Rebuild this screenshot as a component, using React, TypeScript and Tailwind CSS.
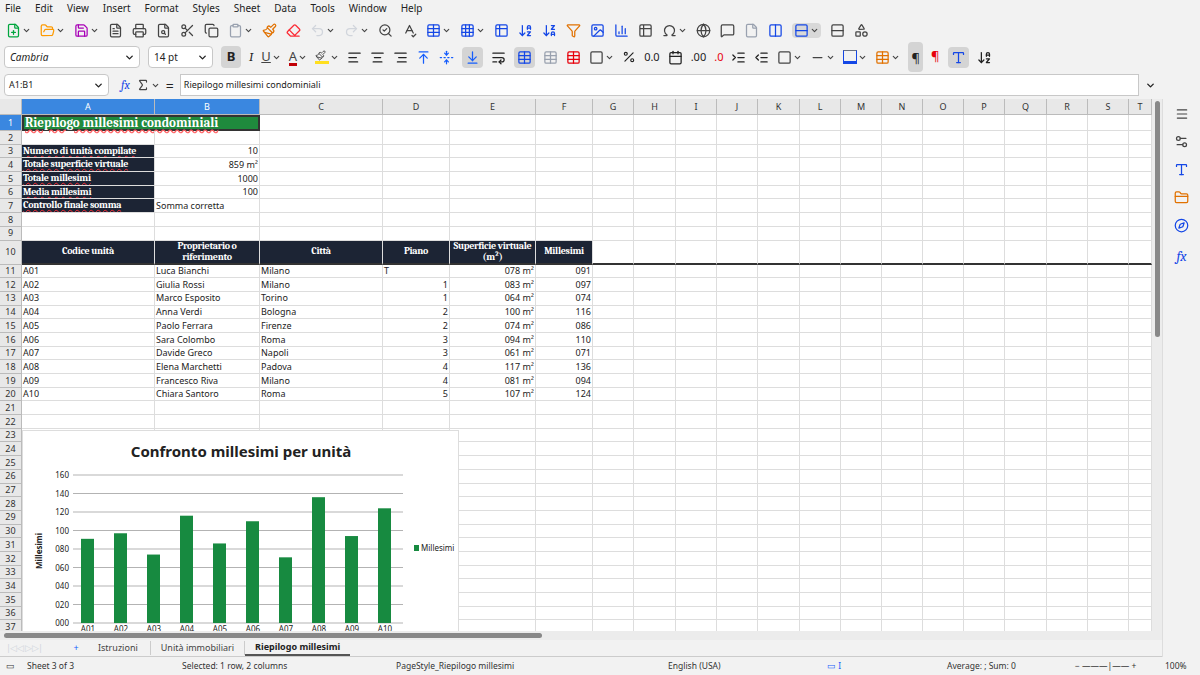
import React from "react";
import {
  FilePlus, FolderOpen, Save, FileText, Printer, FileSearch, Scissors, Copy, Clipboard, Paintbrush, Eraser,
  Undo2, Redo2, SearchCheck, SpellCheck, Table, Grid3x3, ArrowDownAZ, ArrowDownZA, Filter, Image, BarChart3,
  Table2, Omega, Globe, MessageSquare, File, Columns2, Rows2, Shapes, ChevronDown, AlignLeft, AlignCenter,
  AlignRight, ArrowUpToLine, FoldVertical, ArrowDownToLine, WrapText, Percent, Calendar, IndentIncrease,
  IndentDecrease, Square, Minus, Menu, Settings2, Type, FolderClosed, Compass, Sigma,
} from "lucide-react";

const cols: [string, number][] = [
  ["A", 133], ["B", 105], ["C", 123], ["D", 67], ["E", 86], ["F", 57], ["G", 41], ["H", 42], ["I", 41], ["J", 41],
  ["K", 42], ["L", 41], ["M", 41], ["N", 41], ["O", 41], ["P", 41], ["Q", 42], ["R", 41], ["S", 41], ["T", 23],
];
const gridCols = "22px " + cols.map((c) => c[1] + "px").join(" ");

const units = [
  ["A01", "Luca Bianchi", "Milano", "T", "078", "091"],
  ["A02", "Giulia Rossi", "Milano", "1", "083", "097"],
  ["A03", "Marco Esposito", "Torino", "1", "064", "074"],
  ["A04", "Anna Verdi", "Bologna", "2", "100", "116"],
  ["A05", "Paolo Ferrara", "Firenze", "2", "074", "086"],
  ["A06", "Sara Colombo", "Roma", "3", "094", "110"],
  ["A07", "Davide Greco", "Napoli", "3", "061", "071"],
  ["A08", "Elena Marchetti", "Padova", "4", "117", "136"],
  ["A09", "Francesco Riva", "Milano", "4", "081", "094"],
  ["A10", "Chiara Santoro", "Roma", "5", "107", "124"],
];

const dark = "bg-[#1c2434] text-white font-bold font-serif tracking-[-0.3px]";

function rowHeight(r: number) {
  if (r === 1) return 16;
  if (r === 10) return 24;
  return 13.7;
}

function cellContent(r: number, c: number): { text?: React.ReactNode; cls?: string } {
  const info: Record<number, [string, string]> = {
    3: ["Numero di unità compilate", "10"],
    4: ["Totale superficie virtuale", "859 m²"],
    5: ["Totale millesimi", "1000"],
    6: ["Media millesimi", "100"],
    7: ["Controllo finale somma", ""],
  };
  if (r >= 3 && r <= 7) {
    if (c === 0) return { text: info[r][0], cls: dark + " text-[10px] underline decoration-wavy decoration-red-500" };
    if (c === 1) return r === 7 ? { text: "Somma corretta" } : { text: info[r][1], cls: "justify-end" };
  }
  if (r === 10 && c <= 5) {
    const h = ["Codice unità", "Proprietario o riferimento", "Città", "Piano", "Superficie virtuale (m²)", "Millesimi"];
    return { text: h[c], cls: dark + " text-[10px] justify-center text-center leading-[11px] border-b-2 border-b-[#333]" };
  }
  if (r === 10) return { cls: "border-b-2 border-b-[#333]" };
  if (r >= 11 && r <= 20 && c <= 5) {
    const u = units[r - 11];
    if (c === 3) return { text: u[3], cls: u[3] === "T" ? "" : "justify-end" };
    if (c === 4) return { text: u[4] + " m²", cls: "justify-end" };
    if (c === 5) return { text: u[5], cls: "justify-end" };
    return { text: u[c] };
  }
  return {};
}

function Chart() {
  const vals = [91, 97, 74, 116, 86, 110, 71, 136, 94, 124];
  const y = (v: number) => 474 - 430 + (160 - v) * (148 / 160);
  return (
    <div className="absolute left-[22px] top-[331px] w-[437px] h-[202px] bg-white border border-[#ddd]">
      <svg width="437" height="202" className="font-['Lato',sans-serif]">
        <text x="218" y="26" textAnchor="middle" fontSize="15" fontWeight="bold" fill="#222">Confronto millesimi per unità</text>
        {[0, 20, 40, 60, 80, 100, 120, 140, 160].map((v) => (
          <g key={v}>
            <line x1="50" x2="380" y1={y(v)} y2={y(v)} stroke="#b3b3b3" strokeWidth="1" />
            <text x="46" y={y(v) + 3} textAnchor="end" fontSize="8" fill="#222">{String(v).padStart(3, "0")}</text>
          </g>
        ))}
        {vals.map((v, i) => (
          <g key={i}>
            <rect x={58 + i * 33} y={y(v)} width="13" height={y(0) - y(v)} fill="#178a40" />
            <text x={65 + i * 33} y="201" textAnchor="middle" fontSize="8" fill="#222">{"A" + String(i + 1).padStart(2, "0")}</text>
          </g>
        ))}
        <text x="19" y="120" transform="rotate(-90 19 120)" fontSize="8" fontWeight="bold" fill="#222" textAnchor="middle">Millesimi</text>
        <rect x="391" y="114" width="5" height="6" fill="#178a40" />
        <text x="398" y="120" fontSize="8" fill="#222">Millesimi</text>
      </svg>
    </div>
  );
}

function Tb({ children, dd }: { children: React.ReactNode; dd?: boolean }) {
  return (
    <div className="flex items-center gap-[1px] text-[#444]">
      {children}
      {dd && <ChevronDown size={9} strokeWidth={3} />}
    </div>
  );
}

const S = 15;

export default function App() {
  const rows = Array.from({ length: 37 }, (_, i) => i + 1);
  return (
    <div className="w-[1200px] h-[675px] overflow-hidden bg-[#f2f2f2] font-['Open_Sans',sans-serif] text-[#222] flex flex-col">
      <div className="h-[17px] flex items-center gap-[14px] px-[5px] text-[10px]">
        {["File", "Edit", "View", "Insert", "Format", "Styles", "Sheet", "Data", "Tools", "Window", "Help"].map((m) => (
          <span key={m}>{m}</span>
        ))}
      </div>
      <div className="h-[26px] flex items-center gap-[9px] px-[6px]">
        <Tb dd><FilePlus size={S} className="text-green-600" /></Tb>
        <Tb dd><FolderOpen size={S} className="text-amber-500" /></Tb>
        <Tb dd><Save size={S} className="text-fuchsia-700" /></Tb>
        <Tb><FileText size={S} /></Tb><Tb><Printer size={S} /></Tb><Tb><FileSearch size={S} /></Tb>
        <Tb><Scissors size={S} /></Tb><Tb><Copy size={S} /></Tb><Tb dd><Clipboard size={S} className="text-gray-400" /></Tb>
        <Tb><Paintbrush size={S} className="text-amber-600" /></Tb><Tb><Eraser size={S} className="text-red-500" /></Tb>
        <Tb dd><Undo2 size={S} className="text-gray-300" /></Tb><Tb dd><Redo2 size={S} className="text-gray-300" /></Tb>
        <Tb><SearchCheck size={S} /></Tb><Tb><SpellCheck size={S} /></Tb>
        <Tb dd><Table size={S} className="text-blue-700" /></Tb><Tb dd><Grid3x3 size={S} className="text-blue-700" /></Tb>
        <Tb><Table2 size={S} className="text-blue-700" /></Tb><Tb><ArrowDownAZ size={S} className="text-blue-700" /></Tb>
        <Tb><ArrowDownZA size={S} className="text-blue-700" /></Tb><Tb><Filter size={S} className="text-amber-600" /></Tb>
        <Tb><Image size={S} className="text-blue-700" /></Tb><Tb><BarChart3 size={S} className="text-blue-700" /></Tb>
        <Tb><Table2 size={S} /></Tb><Tb dd><Omega size={S} /></Tb><Tb><Globe size={S} /></Tb>
        <Tb><MessageSquare size={S} /></Tb><Tb><File size={S} className="text-gray-400" /></Tb>
        <Tb><Columns2 size={S} className="text-blue-700" /></Tb>
        <div className="bg-[#d8d8d8] rounded px-[2px]"><Tb dd><Rows2 size={S} className="text-blue-700" /></Tb></div>
        <Tb><Rows2 size={S} /></Tb><Tb><Shapes size={S} /></Tb>
      </div>
      <div className="h-[28px] flex items-center gap-[8px] px-[4px]">
        <div className="w-[136px] h-[22px] bg-white border border-[#c8c8c8] rounded flex items-center justify-between pl-[5px] pr-[4px] text-[10px] italic">
          Cambria<ChevronDown size={11} strokeWidth={3} />
        </div>
        <div className="w-[65px] h-[22px] bg-white border border-[#c8c8c8] rounded flex items-center justify-between pl-[5px] pr-[4px] text-[10px]">
          14 pt<ChevronDown size={11} strokeWidth={3} />
        </div>
        <div className="w-[20px] h-[22px] bg-[#d4d4d4] rounded flex items-center justify-center text-[13px] font-bold">B</div>
        <span className="text-[13px] italic font-serif">I</span>
        <Tb dd><span className="text-[13px] underline">U</span></Tb>
        <Tb dd><span className="text-[13px] border-b-[3px] border-red-700 leading-[14px]">A</span></Tb>
        <Tb dd><span className="w-[14px] h-[14px] border-b-[3px] border-yellow-300"><Paintbrush size={11} /></span></Tb>
        <AlignLeft size={S} /><AlignCenter size={S} /><AlignRight size={S} />
        <ArrowUpToLine size={S} className="text-blue-600" /><FoldVertical size={S} className="text-blue-600" />
        <div className="bg-[#d4d4d4] rounded p-[3px]"><ArrowDownToLine size={S} className="text-blue-600" /></div>
        <WrapText size={S} />
        <div className="bg-[#d4d4d4] rounded p-[3px]"><Table size={S} className="text-blue-700" /></div>
        <Table size={S} className="text-gray-400" /><Table size={S} className="text-red-600" />
        <Tb dd><Square size={S} /></Tb><Percent size={14} /><span className="text-[11px]">0.0</span>
        <Calendar size={S} /><span className="text-[11px]">.00</span><span className="text-[11px] text-red-600">.0</span>
        <IndentIncrease size={S} /><IndentDecrease size={S} />
        <Tb dd><Square size={S} /></Tb><Tb dd><Minus size={S} /></Tb>
        <Tb dd><span className="w-[14px] h-[14px] border-b-[3px] border-blue-700 border border-t-gray-500" /></Tb>
        <Tb dd><Table size={S} className="text-amber-600" /></Tb>
        <div className="bg-[#d4d4d4] rounded p-[3px]"><span className="text-[13px]">¶</span></div>
        <span className="text-[13px] text-red-600">¶</span>
        <div className="bg-[#d4d4d4] rounded p-[3px]"><Type size={S} className="text-blue-700" /></div>
        <ArrowDownAZ size={S} />
      </div>
      <div className="h-[28px] flex items-center px-[4px] gap-[6px]">
        <div className="w-[105px] h-[22px] bg-white border border-[#c8c8c8] rounded flex items-center justify-between pl-[4px] pr-[4px] text-[9px]">
          A1:B1<ChevronDown size={11} strokeWidth={3} />
        </div>
        <span className="italic text-blue-700 text-[12px] font-serif ml-[6px]">fx</span>
        <Tb dd><Sigma size={14} /></Tb>
        <span className="text-[14px]">=</span>
        <div className="flex-1 h-[22px] bg-white border border-[#c8c8c8] flex items-center px-[3px] text-[9px]">Riepilogo millesimi condominiali</div>
        <ChevronDown size={11} strokeWidth={3} className="mr-[40px]" />
      </div>
      <div className="flex flex-1 min-h-0">
        <div className="w-[1162px] flex flex-col">
          <div className="flex h-[532px]">
            <div className="relative w-[1152px] bg-white overflow-hidden">
              <div className="grid text-[9px] font-['Liberation_Sans',sans-serif]" style={{ gridTemplateColumns: gridCols, gridTemplateRows: "16px " + rows.map((r) => rowHeight(r) + "px").join(" ") }}>
                <div className="bg-[#e8e8e8] border-r border-b border-[#bbb]" />
                {cols.map(([n], i) => (
                  <div key={n} className={`flex items-center justify-center border-r border-b border-[#bbb] text-[9px] ${i < 2 ? "bg-[#3a87e0] text-white" : "bg-[#e8e8e8] text-[#333]"}`}>{n}</div>
                ))}
                {rows.map((r) => (
                  <React.Fragment key={r}>
                    <div className={`flex items-center justify-center border-r border-b border-[#bbb] ${r === 1 ? "bg-[#3a87e0] text-white" : "bg-[#e8e8e8] text-[#333]"}`}>{r}</div>
                    {r === 1 ? (
                      <>
                        <div className="col-span-2 bg-[#1f8a3d] text-white font-bold text-[13px] font-serif underline decoration-wavy decoration-red-400 flex items-center px-[1px] border-2 border-[#333]">Riepilogo millesimi condominiali</div>
                        {cols.slice(2).map(([n]) => <div key={n} className="border-r border-b border-[#ddd]" />)}
                      </>
                    ) : (
                      cols.map(([n], c) => {
                        const { text, cls } = cellContent(r, c);
                        return (
                          <div key={n} className={`flex items-center px-[1px] overflow-hidden whitespace-nowrap border-r border-b border-[#ddd] ${cls ?? ""}`}>
                            {r === 10 && (c === 1 || c === 4) ? <span className="whitespace-normal">{text}</span> : text}
                          </div>
                        );
                      })
                    )}
                  </React.Fragment>
                ))}
              </div>
              <Chart />
            </div>
            <div className="w-[10px] bg-[#ececec] flex justify-center pt-[2px]">
              <div className="w-[5px] h-[236px] bg-[#888] rounded" />
            </div>
          </div>
          <div className="h-[10px] flex items-center bg-[#ececec] pl-[4px]">
            <div className="w-[538px] h-[5px] bg-[#888] rounded" />
          </div>
          <div className="h-[18px] flex items-center text-[9px] border-b border-[#ccc]">
            <span className="w-[66px] pl-[6px] text-gray-300 tracking-[-1px]">|◁ ◁ ▷ ▷|</span>
            <span className="w-[20px] text-blue-600 text-center">+</span>
            <span className="px-[12px] text-[#444] border-r border-[#ccc]">Istruzioni</span>
            <span className="px-[10px] text-[#444] border-r border-[#ccc]">Unità immobiliari</span>
            <span className="px-[10px] font-bold border-b-2 border-[#555]">Riepilogo millesimi</span>
          </div>
        </div>
        <div className="w-[38px] flex flex-col items-center gap-[13px] pt-[8px] text-[#444] border-l border-[#ddd]">
          <Menu size={14} /><Settings2 size={15} /><Type size={15} className="text-blue-700" />
          <FolderClosed size={15} className="text-amber-600" /><Compass size={15} className="text-blue-700" />
          <span className="italic font-serif text-blue-700 text-[14px]">fx</span>
        </div>
      </div>
      <div className="h-[18px] flex items-center text-[8.5px] text-[#333]">
        <span className="w-[27px] pl-[6px]">▭</span>
        <span className="w-[155px]">Sheet 3 of 3</span>
        <span className="w-[214px]">Selected: 1 row, 2 columns</span>
        <span className="w-[272px]">PageStyle_Riepilogo millesimi</span>
        <span className="w-[159px]">English (USA)</span>
        <span className="w-[120px] text-blue-600">▭ I</span>
        <span className="w-[128px]">Average: ; Sum: 0</span>
        <span className="w-[90px]">− ———|—— +</span>
        <span>100%</span>
      </div>
    </div>
  );
}
